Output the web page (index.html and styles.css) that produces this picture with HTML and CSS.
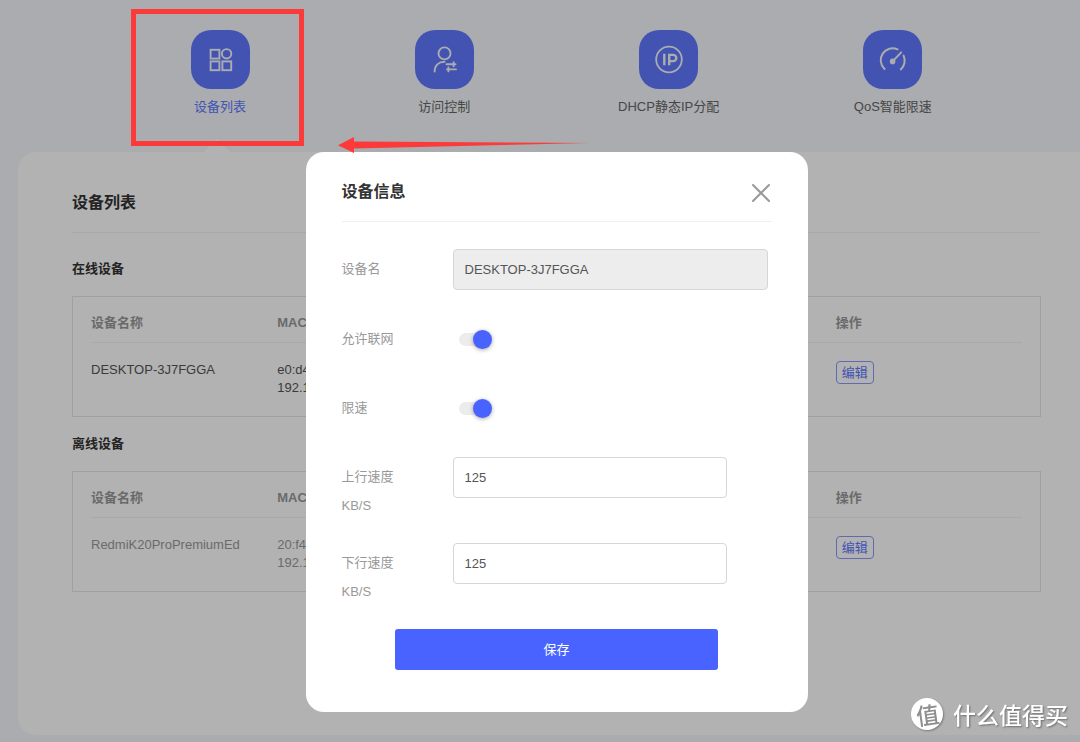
FILE: index.html
```html
<!DOCTYPE html>
<html lang="zh-CN">
<head>
<meta charset="utf-8">
<title>设备列表</title>
<link rel="stylesheet" href="styles.css">
</head>
<body>
<div class="page">
  <nav class="tabs">
    <a class="tab tab-active" href="#devices">
      <span class="tab-icon">
        <svg width="59" height="59" viewBox="0 0 59 59" fill="none" stroke="currentColor" stroke-width="1.9">
          <rect x="19.6" y="19.8" width="8.8" height="8.8"/><circle cx="35.6" cy="23.8" r="4.7"/>
          <rect x="19.6" y="31.4" width="8.8" height="8.8"/><rect x="31.4" y="31.4" width="8.8" height="8.8"/>
        </svg>
      </span>
      <span>设备列表</span>
    </a>
    <a class="tab" href="#access">
      <span class="tab-icon">
        <svg width="59" height="59" viewBox="0 0 59 59" fill="none" stroke="currentColor" stroke-width="1.9" stroke-linecap="round">
          <circle cx="29.5" cy="23.4" r="6"/>
          <path d="M19.6 41.5C19.8 35.5 23.6 31.9 29.6 31.8"/>
          <path d="M31.5 34.2H40.5M38.6 32.2V36.2M32 39.4H41M33.4 37.4V41.4"/>
        </svg>
      </span>
      <span>访问控制</span>
    </a>
    <a class="tab" href="#dhcp">
      <span class="tab-icon">
        <svg width="59" height="59" viewBox="0 0 59 59" fill="none" stroke="currentColor" stroke-width="1.8">
          <circle cx="30" cy="29.5" r="12.8"/>
          <path stroke-width="2.4" d="M25.3 23.8V35.2M30.2 35.2V24.9H34.2A3.1 3.1 0 0 1 34.2 31.1H30.2"/>
        </svg>
      </span>
      <span>DHCP静态IP分配</span>
    </a>
    <a class="tab" href="#qos">
      <span class="tab-icon">
        <svg width="59" height="59" viewBox="0 0 59 59" fill="none" stroke="currentColor" stroke-width="2" stroke-linecap="round">
          <path d="M21.6 39A11.9 11.9 0 0 1 34.6 19.4M40.6 25.6A11.9 11.9 0 0 1 37.8 39.4M29.6 31.4L38.2 22.4"/>
          <circle cx="29.6" cy="31.4" r="2.8" fill="currentColor" stroke="none"/>
        </svg>
      </span>
      <span>QoS智能限速</span>
    </a>
  </nav>

  <main class="panel" id="devices">
    <h1 class="title">设备列表</h1>
    <h2 class="subtitle">在线设备</h2>
    <div class="box">
      <table class="devices">
        <thead><tr><th class="col">设备名称</th><th colspan="3">MAC</th><th class="col">操作</th></tr></thead>
        <tbody><tr><td>DESKTOP-3J7FGGA</td><td colspan="3">e0:d4<br>192.1</td><td><button class="edit" type="button">编辑</button></td></tr></tbody>
      </table>
    </div>
    <h2 class="subtitle">离线设备</h2>
    <div class="box">
      <table class="devices devices-offline">
        <thead><tr><th class="col">设备名称</th><th colspan="3">MAC</th><th class="col">操作</th></tr></thead>
        <tbody><tr><td>RedmiK20ProPremiumEd</td><td colspan="3">20:f4<br>192.1</td><td><button class="edit" type="button">编辑</button></td></tr></tbody>
      </table>
    </div>
  </main>
</div>

<div class="overlay">
  <section class="dialog" role="dialog" aria-labelledby="dialog-title">
    <header class="dialog-head">
      <h2 class="title-text" id="dialog-title">设备信息</h2>
      <button class="close" type="button" aria-label="关闭">
        <svg width="20" height="20" viewBox="0 0 20 20" stroke="currentColor" stroke-width="2" stroke-linecap="round"><path d="M1 3L17 19M17 3L1 19"/></svg>
      </button>
    </header>
    <form class="form">
      <div class="row">
        <label class="label" for="name">设备名</label>
        <input class="field field-wide" id="name" type="text" value="DESKTOP-3J7FGGA" disabled>
      </div>
      <div class="row">
        <label class="label" for="allow">允许联网</label>
        <input class="switch" id="allow" type="checkbox" role="switch" checked>
      </div>
      <div class="row">
        <label class="label" for="limit">限速</label>
        <input class="switch" id="limit" type="checkbox" role="switch" checked>
      </div>
      <div class="row">
        <label class="label" for="up">上行速度<br>KB/S</label>
        <input class="field" id="up" type="text" value="125">
      </div>
      <div class="row">
        <label class="label" for="down">下行速度<br>KB/S</label>
        <input class="field" id="down" type="text" value="125">
      </div>
      <button class="save" type="button">保存</button>
    </form>
  </section>
</div>

<div class="frame"></div>
<svg class="arrow" width="250" height="16" viewBox="0 0 250 16"><path fill="#fc3a3a" d="M0 8.2L16 0V4.5L250 6L16 11.5V16Z"/></svg>

<div class="watermark"><span class="badge"><span class="badge-char">值</span></span><span>什么值得买</span></div>
</body>
</html>
```

FILE: styles.css
```css
* { box-sizing: border-box; }

body {
  margin: 0;
  min-height: 100vh;
  position: relative;
  overflow: hidden;
  background: #f4f6fb;
  color: #333;
  font: 13px/18px "Liberation Sans", "Noto Sans CJK SC", sans-serif;
}

button, input { font: inherit; margin: 0; }
h1, h2 { margin: 0; }

/* The page is wider than the window and runs off its right edge. */
.page { margin-right: -33px; padding: 0 18px 7px; }

.tabs {
  display: grid;
  grid-template-columns: repeat(4, 1fr);
  padding: 30px 90px 36px;
}
.tab {
  display: flex;
  flex-direction: column;
  align-items: center;
  gap: 9px;
  color: #666;
  text-decoration: none;
  position: relative;
}
.tab-active { color: #6078ff; }
.tab-icon {
  width: 59px;
  height: 59px;
  border-radius: 20px;
  background: #6078ff;
  color: #f4f6fb;
}
.tab-icon svg { display: block; }
.tab-active::after {
  content: "";
  position: absolute;
  top: 108px;
  left: 50%;
  margin-left: -16px;
  border: 13px solid transparent;
  border-top: 0;
  border-bottom: 14px solid #fff;
}

.panel {
  min-height: 583px;
  padding: 32px 54px;
  border-radius: 18px;
  background: #fff;
}
.title {
  padding-bottom: 10px;
  border-bottom: 1px solid #f3f3f3;
  font-size: 16px;
  line-height: 38px;
}
.title-text { font-size: 16px; line-height: 24px; }
.subtitle { padding-top: 26px; font-size: 13px; line-height: 20px; }
.box + .subtitle { padding-top: 17px; }
.box {
  margin-top: 17px;
  padding: 16px 18px 19px;
  border: 1px solid #e6e6e6;
}
.devices { width: 100%; table-layout: fixed; border-collapse: collapse; }
.devices th, .devices td { padding: 0; text-align: left; vertical-align: top; }
.devices th {
  padding-bottom: 9px;
  border-bottom: 1px solid #f3f3f3;
  color: #999;
  line-height: 20px;
}
.devices .col { width: 20%; }
.devices td { padding-top: 18px; color: #555; }
.devices-offline td { color: #999; }
.edit {
  width: 38px;
  height: 23px;
  padding: 0;
  border: 1px solid #8898ff;
  border-radius: 4px;
  background: none;
  color: #6078ff;
}

.overlay {
  position: fixed;
  inset: 0 -33px 0 0;
  display: flex;
  justify-content: center;
  align-items: flex-start;
  padding-top: 152px;
  background: rgba(0, 0, 0, 0.3);
}
.dialog {
  width: 502px;
  padding: 26px 36px 42px;
  border-radius: 18px;
  background: #fff;
}
.dialog-head {
  display: flex;
  justify-content: space-between;
  align-items: center;
  height: 44px;
  padding-bottom: 16px;
  border-bottom: 1px solid #f0f0f0;
}
.close { padding: 0; border: 0; background: none; color: #999; }
.close svg { display: block; }
.form { display: grid; gap: 22px; padding-top: 27px; }
.row {
  display: grid;
  grid-template-columns: 111px 1fr;
  align-items: start;
  min-height: 47px;
}
.row:nth-child(n + 4) { min-height: 64px; }
.row:first-child { min-height: 48px; }
.label { padding-top: 5px; color: #999; line-height: 29px; }
.field {
  width: 274px;
  height: 41px;
  padding: 0 11px;
  border: 1px solid #d6d6d6;
  border-radius: 4px;
  background: #fff;
  color: #555;
}
.field-wide { width: 315px; }
.field:disabled { background: #ededed; }
.switch {
  appearance: none;
  position: relative;
  display: flex;
  align-items: center;
  width: 33px;
  height: 19px;
  margin: 11px 0 0 6px;
}
.switch::before {
  content: "";
  width: 28px;
  height: 13px;
  border-radius: 7px;
  background: #ececec;
}
.switch::after {
  content: "";
  position: absolute;
  right: 0;
  width: 19px;
  height: 19px;
  border-radius: 50%;
  background: #4863ff;
  box-shadow: 0 1px 4px rgba(0, 0, 0, 0.35);
}
.save {
  justify-self: center;
  width: 75%;
  height: 41px;
  border: 0;
  border-radius: 3px;
  background: #4863ff;
  color: #fff;
}

.frame {
  position: absolute;
  left: 131px;
  top: 9px;
  width: 173px;
  height: 137px;
  border: 5px solid #fc3a3a;
}
.arrow { position: absolute; left: 338px; top: 137px; }

.watermark {
  position: fixed;
  right: 12px;
  bottom: 12px;
  display: flex;
  align-items: center;
  gap: 10px;
  color: #fff;
  font-family: "Noto Sans CJK SC", sans-serif;
  font-size: 23px;
  font-weight: 500;
  line-height: 32px;
  text-shadow: 1px 1px 2px rgba(0, 0, 0, 0.4);
}
.badge {
  display: grid;
  place-items: center;
  width: 32px;
  height: 32px;
  border-radius: 50%;
  background: #fff;
  box-shadow: 1px 1px 2px rgba(0, 0, 0, 0.3);
  color: #8e8e8e;
  font-size: 23px;
  text-shadow: none;
}
.badge-char { transform: rotate(-8deg); }
```
